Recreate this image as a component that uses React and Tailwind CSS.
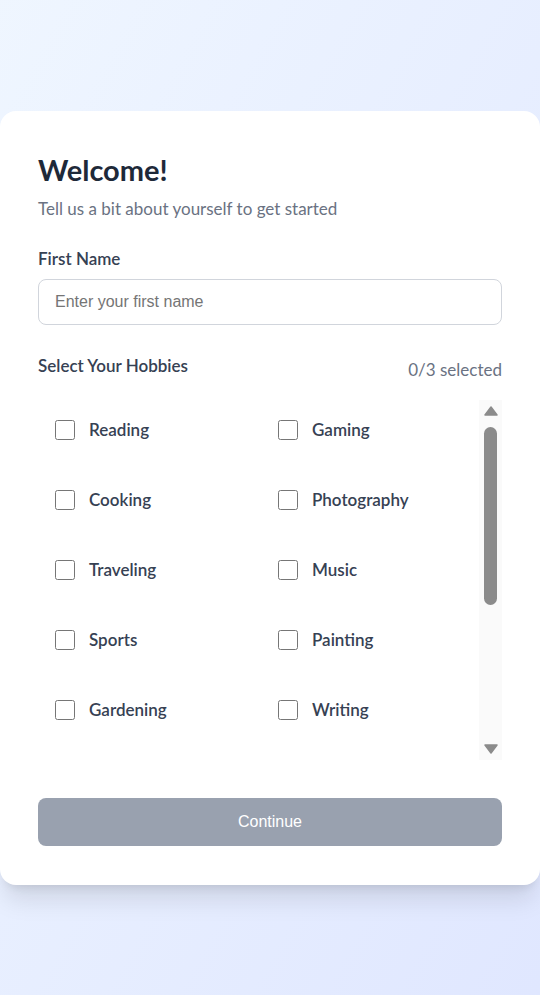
import React, { useEffect, useRef, useState } from 'react';

const HOBBIES = [
    'Reading', 'Gaming',
    'Cooking', 'Photography',
    'Traveling', 'Music',
    'Sports', 'Painting',
    'Gardening', 'Writing',
    'Dancing', 'Hiking',
    'Yoga', 'Fishing',
    'Knitting', 'Cycling',
    'Swimming', 'Running',
];

const MAX = 3;
const TRACK = 306; // px between the two arrow buttons, minus the thumb inset

const Arrow = ({ down, onClick }) => (
    <button
        type="button"
        onClick={onClick}
        className="h-[22px] w-full flex items-center justify-center shrink-0"
    >
        <svg width="14" height="10" viewBox="0 0 14 10">
            <polygon
                points={down ? '1,1 13,1 7,9' : '1,9 13,9 7,1'}
                fill="#8b8b8b"
                stroke="#8b8b8b"
                strokeWidth="1.5"
                strokeLinejoin="round"
            />
        </svg>
    </button>
);

export default function App() {
    const [name, setName] = useState('');
    const [picked, setPicked] = useState([]);
    const [thumb, setThumb] = useState({ top: 0, height: 178 });
    const listRef = useRef(null);

    const syncThumb = () => {
        const el = listRef.current;
        if (!el) return;
        const ratio = el.clientHeight / el.scrollHeight;
        const height = Math.max(24, Math.round(TRACK * ratio));
        const max = el.scrollHeight - el.clientHeight;
        const top = max > 0 ? Math.round((TRACK - height) * (el.scrollTop / max)) : 0;
        setThumb({ top, height });
    };

    useEffect(() => {
        syncThumb();
    }, []);

    const nudge = (dy) => {
        if (listRef.current) listRef.current.scrollBy({ top: dy });
    };

    const toggle = (h) => {
        setPicked((prev) => {
            if (prev.includes(h)) return prev.filter((x) => x !== h);
            if (prev.length >= MAX) return prev;
            return [...prev, h];
        });
    };

    const ready = name.trim() && picked.length > 0;

    return (
        <div
            className="min-h-screen flex items-center justify-center bg-gradient-to-br from-blue-50 to-indigo-100"
            style={{ fontFamily: 'Lato, "Noto Sans", sans-serif' }}
        >
            <div className="w-full max-w-xl bg-white rounded-2xl shadow-xl px-[38px] pt-[41px] pb-[39px]">
                <div className="mb-[26px]">
                    <h1 className="text-[29px] leading-9 font-bold text-gray-800 mb-[9px]">Welcome!</h1>
                    <p className="text-[17px] leading-6 text-gray-500">
                        Tell us a bit about yourself to get started
                    </p>
                </div>

                <label className="block text-[17px] leading-6 font-semibold text-gray-700 mb-2">
                    First Name
                </label>
                <input
                    type="text"
                    value={name}
                    onChange={(e) => setName(e.target.value)}
                    placeholder="Enter your first name"
                    className="w-full h-[46px] px-4 border border-gray-300 rounded-lg text-base text-gray-800 placeholder:text-[#757575] outline-none focus:border-indigo-400"
                    style={{ fontFamily: '"Liberation Sans", Arial, sans-serif' }}
                />

                <div className="mt-[29px] flex items-center justify-between">
                    <span className="block text-[17px] leading-6 font-semibold text-gray-700 mb-2">
                        Select Your Hobbies
                    </span>
                    <span className="text-[17px] leading-6 text-gray-500">
                        {picked.length}/{MAX} selected
                    </span>
                </div>

                <div className="mt-[14px] flex h-[360px]">
                    <div
                        ref={listRef}
                        onScroll={syncThumb}
                        className="flex-1 overflow-y-auto [scrollbar-width:none]"
                    >
                        <div className="grid grid-cols-[223px_1fr] gap-y-3.5 pt-0.5">
                            {HOBBIES.map((h) => (
                                <label
                                    key={h}
                                    className="flex items-center gap-3.5 px-[17px] py-4 cursor-pointer"
                                >
                                    <input
                                        type="checkbox"
                                        checked={picked.includes(h)}
                                        onChange={() => toggle(h)}
                                        className="w-5 h-5 m-0 shrink-0"
                                    />
                                    <span className="text-[17px] leading-6 font-semibold text-gray-700">
                                        {h}
                                    </span>
                                </label>
                            ))}
                        </div>
                    </div>

                    <div className="w-[23px] shrink-0 bg-[#fafafa] flex flex-col">
                        <Arrow onClick={() => nudge(-40)} />
                        <div className="flex-1 py-[5px]">
                            <div className="relative h-full">
                                <div
                                    className="absolute left-[5px] w-[13px] rounded-full bg-[#8b8b8b]"
                                    style={{ top: thumb.top, height: thumb.height }}
                                />
                            </div>
                        </div>
                        <Arrow down onClick={() => nudge(40)} />
                    </div>
                </div>

                <button
                    type="button"
                    disabled={!ready}
                    className="mt-[38px] w-full h-12 rounded-lg bg-gray-400 text-white text-base"
                    style={{ fontFamily: '"Liberation Sans", Arial, sans-serif' }}
                >
                    Continue
                </button>
            </div>
        </div>
    );
}
